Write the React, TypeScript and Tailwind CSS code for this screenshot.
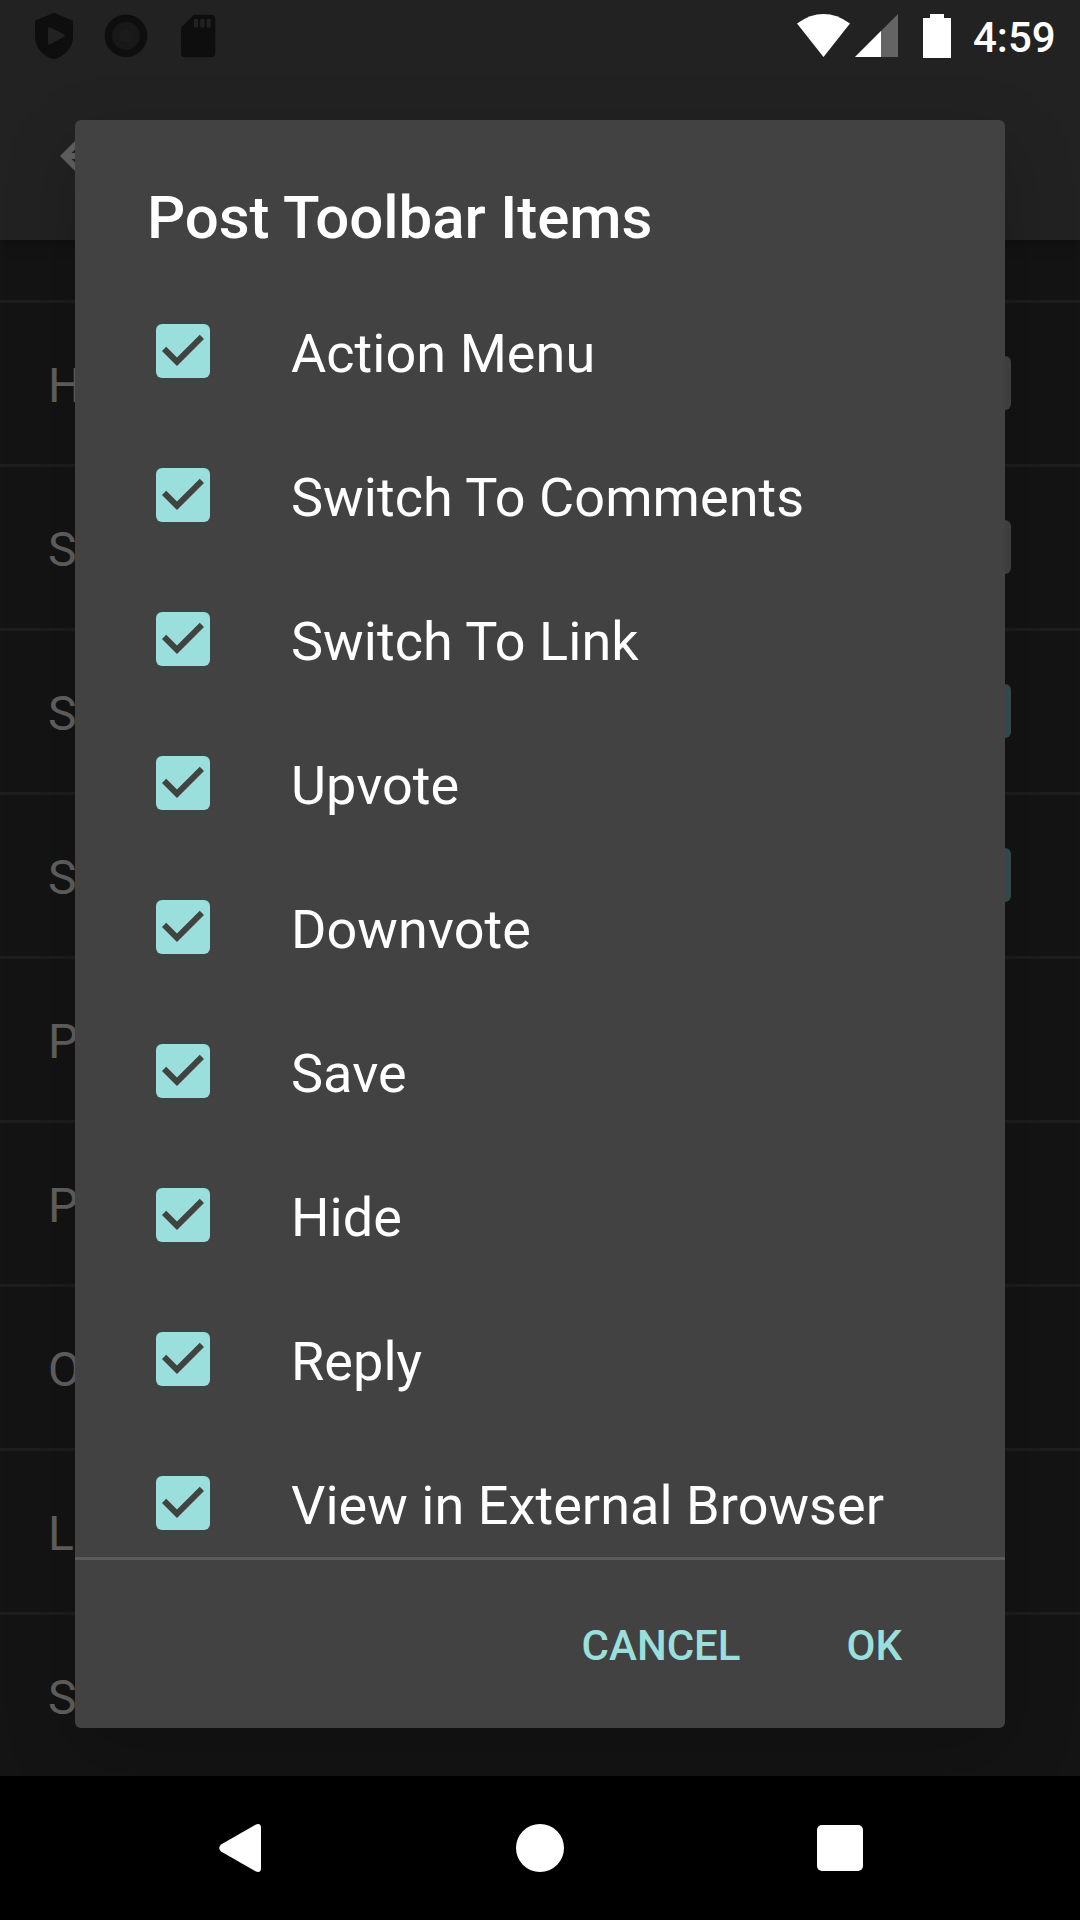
const toolbarItems = [
  'Action Menu',
  'Switch To Comments',
  'Switch To Link',
  'Upvote',
  'Downvote',
  'Save',
  'Hide',
  'Reply',
  'View in External Browser',
];

type Setting = { label: string; box?: 'off' | 'on' };

const settings: Setting[] = [
  { label: 'H', box: 'off' },
  { label: 'S', box: 'off' },
  { label: 'S', box: 'on' },
  { label: 'S', box: 'on' },
  { label: 'P' },
  { label: 'P' },
  { label: 'O' },
  { label: 'L' },
  { label: 'S' },
];

function StatusBar() {
  return (
    <div className="flex h-[72px] items-start justify-between">
      <svg width="240" height="72" viewBox="0 0 240 72" fill="#0e0e0e">
        <path
          fillRule="evenodd"
          d="M54 12.7 35 20.8V36.5C35 47.5 43 56.5 54 59.3 65 56.5 73 47.5 73 36.5V20.8ZM48 29.2Q48 26.300 50.600 27.600L63.800 34.200Q65.800 35.600 63.800 37L50.600 44Q48 45.300 48 42.400Z"
        />
        <circle cx="126" cy="35.800" r="21.300" />
        <circle cx="126" cy="35.800" r="14" fill="#181818" />
        <circle cx="126" cy="35.800" r="6.500" fill="#1b1b1b" />
        <path
          fillRule="evenodd"
          d="M194 14.700H211Q215.300 14.700 215.300 19V53Q215.300 57.300 211 57.300H185.300Q181 57.300 181 53V27.600ZM194 19V27.500H198V19ZM200.400 19V27.500H204.400V19ZM206.700 19V27.500H210.700V19Z"
        />
      </svg>
      <div className="flex h-[72px]">
        <svg width="174" height="72" viewBox="0 0 174 72" fill="#ffffff">
          <path d="M17 23.500Q43.500 4.700 70 23.500L43.500 57Z" />
          <path d="M118 14V57H75Z" fill="#646464" />
          <path d="M101 31V57H75Z" />
          <path d="M150 14H164V18H171V58H143V18H150Z" />
        </svg>
        <span className="w-[126px] pl-[19px] pt-[13px] text-[42px] leading-[49px] font-medium text-white">4:59</span>
      </div>
    </div>
  );
}

function SettingsScreen() {
  return (
    <div className="flex h-[1776px] flex-col bg-[#141414]">
      <header className="relative h-[240px] shrink-0 bg-[#222222] shadow-[0_4px_12px_rgba(0,0,0,0.25)]">
        <StatusBar />
        <div className="flex h-[168px] items-center px-12">
          <svg width="72" height="72" viewBox="0 0 24 24" fill="#616161">
            <path d="M20 11H7.830l5.590-5.590L12 4l-8 8 8 8 1.410-1.410L7.830 13H20z" />
          </svg>
        </div>
      </header>
      <ul className="mt-[60px] flex flex-col">
        {settings.map((setting, index) => (
          <li
            key={index}
            className="flex h-[164px] items-center justify-between border-t-[3px] border-[#1e1e1e] pr-[69px] pl-12"
          >
            <span className="pt-[4px] text-[48px] leading-[56px] text-[#626262]">{setting.label}</span>
            {setting.box === 'off' && <span className="-mt-px size-[54px] rounded-[6px] bg-[#454545]" />}
            {setting.box === 'on' && <span className="-mt-px size-[54px] rounded-[6px] bg-[#375051]" />}
          </li>
        ))}
      </ul>
    </div>
  );
}

function CheckBox() {
  return (
    <svg width="54" height="54" viewBox="0 0 18 18" className="shrink-0">
      <rect width="18" height="18" rx="2" fill="#9adfdc" />
      <path d="M7 14 2 9l1.410-1.410L7 11.170l7.590-7.590L16 5z" fill="#424242" />
    </svg>
  );
}

function ToolbarItemsDialog() {
  return (
    <div className="absolute top-[120px] left-[75px] flex h-[1608px] w-[930px] flex-col overflow-hidden rounded-[6px] bg-[#424242]">
      <h1 className="h-[159px] shrink-0 pt-[63px] pl-[72px] text-[60px] leading-[70px] font-medium tracking-[-0.08px] text-white">
        Post Toolbar Items
      </h1>
      <ul className="flex h-[1278px] flex-col overflow-hidden">
        {toolbarItems.map((item) => (
          <li key={item} className="flex h-36 shrink-0 items-center pl-[81px]">
            <CheckBox />
            <span className="pt-[5px] pl-[81px] text-[54px] leading-[63px] tracking-[0.05px] text-white">{item}</span>
          </li>
        ))}
      </ul>
      <div className="flex flex-1 items-start justify-end border-t-[3px] border-[#5b5b5b] pt-[61px] pr-[103px] text-[42px] leading-[49px] font-medium text-[#9adfdc]">
        <button className="mr-[106px]">CANCEL</button>
        <button>OK</button>
      </div>
    </div>
  );
}

function NavigationBar() {
  return (
    <nav className="flex h-36 items-center bg-black pl-[219px]">
      <svg width="42" height="48" viewBox="0 0 42 48" fill="#ffffff">
        <path d="M2 20.500 36.500 .7Q42-1.500 42 4V44Q42 49.500 36.500 47.300L2 27.500Q-1.500 24 2 20.500Z" />
      </svg>
      <span className="ml-[255px] size-12 rounded-full bg-white" />
      <span className="ml-[253px] size-[46px] rounded-[5px] bg-white" />
    </nav>
  );
}

export default function App() {
  return (
    <main className="relative h-[1920px] w-[1080px] overflow-hidden bg-black font-[Roboto,sans-serif]">
      <SettingsScreen />
      <div className="absolute inset-x-0 top-0 h-[1776px] overflow-hidden">
        <div className="absolute top-[120px] left-[75px] h-[1608px] w-[930px] rounded-[6px] shadow-[0_24px_72px_rgba(0,0,0,0.2)]" />
      </div>
      <ToolbarItemsDialog />
      <NavigationBar />
    </main>
  );
}
